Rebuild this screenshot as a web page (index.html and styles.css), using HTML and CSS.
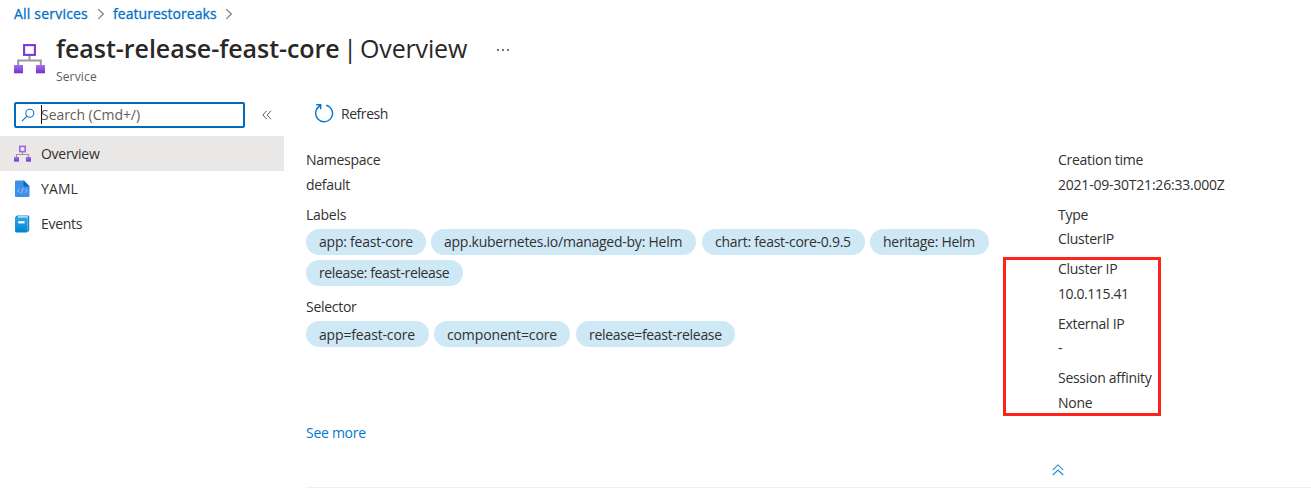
FILE: index.html
```html
<!DOCTYPE html>
<html lang="en">
<head>
<meta charset="utf-8">
<title>feast-release-feast-core | Overview</title>
<link rel="stylesheet" href="styles.css">
</head>
<body>
<svg width="0" height="0" class="defs" aria-hidden="true">
  <defs>
    <linearGradient id="purple" x1="0" y1="0" x2="0" y2="1"><stop offset="0" stop-color="#a56ff0"/><stop offset="1" stop-color="#6f35d0"/></linearGradient>
    <linearGradient id="blue" x1="0" y1="0" x2="0" y2="1"><stop offset="0" stop-color="#2ba8e8"/><stop offset="1" stop-color="#0083d6"/></linearGradient>
    <symbol id="service" viewBox="0 0 31 30">
      <path d="M15.5 11v5M4.2 21v-4.6h22.6V21" fill="none" stroke="#999" stroke-width="2"/>
      <rect x="10.1" y="1.1" width="10.8" height="9.8" fill="#fff" stroke="#773adc" stroke-width="2.1"/>
      <rect x="0" y="21" width="9" height="8.3" fill="url(#purple)"/>
      <rect x="22" y="21" width="9" height="8.3" fill="url(#purple)"/>
    </symbol>
    <symbol id="service-small" viewBox="0 0 17 18">
      <path d="M8.5 7v2.5M2.5 12V9.5h12V12" fill="none" stroke="#999" stroke-width="1.2"/>
      <rect x="5.8" y="1.4" width="5.4" height="5.2" fill="#f4eefc" stroke="#9a64e8" stroke-width="1.6"/>
      <rect x="0" y="12" width="5" height="4.6" fill="url(#purple)"/>
      <rect x="12" y="12" width="5" height="4.6" fill="url(#purple)"/>
    </symbol>
  </defs>
</svg>
<nav class="breadcrumb">
  <a class="crumb crumb-all">All services</a>
  <svg class="sep" viewBox="0 0 8 12"><path d="M1.2 1.2 6.4 6 1.2 10.8"/></svg>
  <a class="crumb crumb-store">featurestoreaks</a>
  <svg class="sep" viewBox="0 0 8 12"><path d="M1.2 1.2 6.4 6 1.2 10.8"/></svg>
</nav>
<header class="header">
  <svg class="header-icon"><use href="#service"/></svg>
  <div class="titles">
    <h1 class="title"><span class="name">feast-release-feast-core</span><span class="bar">|</span><span class="view">Overview</span>
      <svg class="more" viewBox="0 0 14 4"><circle cx="2" cy="2" r=".9"/><circle cx="7" cy="2" r=".9"/><circle cx="12" cy="2" r=".9"/></svg>
    </h1>
    <div class="kind">Service</div>
  </div>
</header>
<div class="body">
  <aside class="sidebar">
    <div class="search-row">
      <div class="search">
        <svg class="lens" viewBox="0 0 14 14"><circle cx="8.8" cy="5.2" r="4"/><path d="M5.9 8.1.9 13.1"/></svg>
        <span class="placeholder">Search (Cmd+/)</span>
      </div>
      <svg class="collapse" viewBox="0 0 10 10"><path d="M4.7.8.9 5l3.8 4.2M9 .8 5.2 5 9 9.2"/></svg>
    </div>
    <ul class="menu">
      <li class="item selected"><svg class="item-icon"><use href="#service-small"/></svg><span>Overview</span></li>
      <li class="item"><svg class="item-icon" viewBox="0 0 17 18"><path d="M1 1.5Q1 .5 2 .5h8l5.5 5.7V16q0 1-1 1H2q-1 0-1-1z" fill="#408ee7"/><path d="M9.5.5 15.5 6.5h-5q-1 0-1-1z" fill="#0068bd"/><path d="M5.6 8.6 3.6 10.7l2 2M11 8.6l2 2.1-2 2M9.2 8 7.4 13.2" fill="none" stroke="#a5d3f8" stroke-width=".9"/></svg><span class="wide">YAML</span></li>
      <li class="item"><svg class="item-icon" viewBox="0 0 17 18"><path d="M3 .5h11.2q1 0 1 1v14q0 1-1 1H3z" fill="#1b84c4"/><path d="M3.6 1.2h10.2v14.6H3.6z" fill="#d8eefa"/><path d="M1.2 2.3 3.2.5v15l-2 1z" fill="#1272af"/><path d="M1.2 2.4h11.6q.8 0 .8.8v13.4q0 .8-.8.8H2q-.8 0-.8-.8z" fill="url(#blue)"/><rect x="4.2" y="6.2" width="6.4" height="2.2" fill="#fff"/></svg><span>Events</span></li>
    </ul>
  </aside>
  <main class="main">
    <div class="toolbar">
      <svg class="refresh" viewBox="0 0 20 20"><path d="M6 3A8.4 8.4 0 1 0 12.2 2.2" /><path d="M2.2 1.8h4.5v4.5M6.5 2 2.6 5.9"/></svg>
      <span>Refresh</span>
    </div>
    <div class="essentials">
      <section class="left">
        <div class="row">Namespace</div>
        <div class="row value">default</div>
        <div class="row">Labels</div>
        <div class="pills">
          <span class="pill p1">app: feast-core</span><span class="pill p2">app.kubernetes.io/managed-by: Helm</span><span class="pill p3">chart: feast-core-0.9.5</span><span class="pill p4">heritage: Helm</span><span class="pill p5">release: feast-release</span>
        </div>
        <div class="row selector">Selector</div>
        <div class="pills selector-pills">
          <span class="pill p6">app=feast-core</span><span class="pill p7">component=core</span><span class="pill p8">release=feast-release</span>
        </div>
        <a class="see-more">See more</a>
      </section>
      <section class="right">
        <div class="row">Creation time</div>
        <div class="row value date">2021-09-30T21:26:33.000Z</div>
        <div class="row">Type</div>
        <div class="row value">ClusterIP</div>
        <div class="row">Cluster IP</div>
        <div class="row value ip">10.0.115.41</div>
        <div class="row">External IP</div>
        <div class="row value">-</div>
        <div class="row">Session affinity</div>
        <div class="row value">None</div>
        <div class="highlight"></div>
      </section>
    </div>
    <div class="fold"><svg class="fold-icon" viewBox="0 0 12 12"><path d="M.8 5.9 6 .9l5.2 5M.8 11 6 6l5.2 5"/></svg></div>
  </main>
</div>
</body>
</html>
```
FILE: styles.css
```css
* { box-sizing: border-box; }
body { margin: 0; width: 1311px; height: 504px; overflow: hidden; background: #fff; color: #323130; font: 14px/20px "Open Sans", "Noto Sans", sans-serif; letter-spacing: -.28px; }
.defs { display: block; position: absolute; }
svg { display: block; flex: none; }
.breadcrumb { display: flex; align-items: center; height: 28px; padding-left: 14px; }
.crumb { color: #0072c9; letter-spacing: .05px; -webkit-text-stroke: .3px #0072c9; white-space: nowrap; }
.crumb-all { width: 75px; letter-spacing: .2px; }
.crumb-store { width: 104px; }
.sep { width: 8px; height: 12px; margin: 0 8px; fill: none; stroke: #767676; stroke-width: 1.1; }
.header { display: flex; height: 74px; padding-left: 14px; }
.header-icon { width: 31px; height: 30px; margin-top: 16px; }
.titles { margin-left: 11px; }
.title { display: flex; align-items: center; height: 41px; margin: 0; font-size: 25px; font-weight: 400; line-height: 41px; white-space: nowrap; color: #292827; }
.name { width: 284px; font-weight: 600; letter-spacing: -.04px; }
.bar { width: 20px; text-align: center; }
.view { width: 108px; letter-spacing: -.15px; }
.more { width: 14px; height: 4px; margin: 2px 0 0 28px; fill: #323130; }
.kind { font-size: 12px; line-height: 16px; letter-spacing: .15px; color: #605e5c; }
.body { display: flex; }
.sidebar { width: 284px; flex: none; }
.search-row { display: flex; align-items: center; height: 26px; padding-left: 14px; }
.search { display: flex; align-items: center; width: 231px; height: 26px; border: 2px solid #006cbe; border-radius: 2px; padding-left: 5px; color: #605e5c; }
.lens { width: 14px; height: 14px; margin-bottom: 1px; fill: none; stroke: #0078d4; stroke-width: 1.1; }
.placeholder { margin: 0 0 2px 6px; border-left: 1px solid #111; line-height: 19px; letter-spacing: -.05px; text-indent: -1px; white-space: nowrap; }
.collapse { width: 10px; height: 10px; margin-left: 17px; fill: none; stroke: #605e5c; stroke-width: 1; }
.menu { list-style: none; margin: 8px 0 0; padding: 0; }
.item { display: flex; align-items: center; height: 35px; padding-left: 14px; }
.selected { background: #e9e8e7; }
.wide { letter-spacing: .1px; }
.item-icon { width: 17px; height: 18px; margin-right: 10px; }
.main { flex: 1; min-width: 0; }
.toolbar { display: flex; align-items: center; height: 24px; margin-left: 30px; }
.refresh { width: 20px; height: 20px; margin: 0 7px 2px 0; fill: none; stroke: #0078d4; stroke-width: 1.4; }
.toolbar span { letter-spacing: -.45px; }
.essentials { display: flex; padding: 22px 0 0 22px; height: 333px; }
.left { width: 752px; flex: none; }
.right { position: relative; }
.row { height: 24.6px; line-height: 24px; white-space: nowrap; }
.value { height: 30px; }
.date { letter-spacing: -.22px; }
.ip { letter-spacing: -.4px; }
.pills { display: flex; flex-wrap: wrap; gap: 5px; width: 700px; padding-top: 1.8px; }
.selector-pills { padding-top: .8px; }
.selector-pills .pill { line-height: 28px; }
.pill { height: 26px; border-radius: 13px; background: #cfe8f6; padding-left: 13px; line-height: 26px; white-space: nowrap; }
.p1 { width: 120px; letter-spacing: -.23px; }
.p2 { width: 265px; margin-right: 1px; letter-spacing: -.25px; }
.p3 { width: 163px; }
.p4 { width: 119px; }
.p5 { width: 157px; letter-spacing: -.37px; }
.p6 { width: 123px; letter-spacing: -.16px; }
.p7 { width: 136px; margin-right: 1px; letter-spacing: -.13px; }
.p8 { width: 159px; letter-spacing: -.3px; }
.selector { height: 34px; padding-top: 9px; }
.see-more { display: block; margin-top: 76px; color: #0078d4; }
.highlight { position: absolute; left: -55px; top: 109px; width: 158px; height: 159px; border: 3px solid #fe231c; }
.fold { height: 29.6px; margin-left: 22px; height: 29px; border-bottom: 1px solid #f0efee; padding: 5px 0 0 746px; }
.fold-icon { width: 12px; height: 12px; fill: none; stroke: #2188cf; stroke-width: 1.1; }
```
